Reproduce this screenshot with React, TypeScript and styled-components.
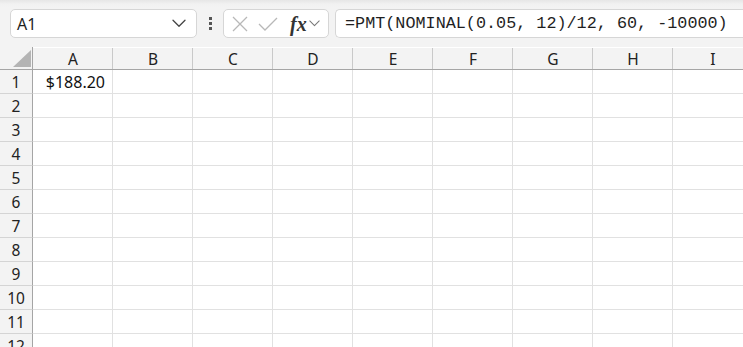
// REACT //
import React from 'react';

// COMPONENTS //
import styled, { createGlobalStyle } from 'styled-components';

const COLUMNS = ['A', 'B', 'C', 'D', 'E', 'F', 'G', 'H', 'I'];
const ROWS = [1, 2, 3, 4, 5, 6, 7, 8, 9, 10, 11, 12];

const cellValues: Record<string, string> = {
    A1: '$188.20',
};

const ChevronDown: React.FC<{ size?: number; color?: string }> = ({ size = 14, color = '#444' }) => (
    <svg width={size} height={size * 0.6} viewBox="0 0 14 8" fill="none">
        <path d="M1 1l6 6 6-6" stroke={color} strokeWidth="1.3" strokeLinecap="round" strokeLinejoin="round" />
    </svg>
);

const App: React.FC = () => {
    return (
        <Page>
            <GlobalStyle />
            <Toolbar>
                <NameBox>
                    <NameText>A1</NameText>
                    <ChevronDown />
                </NameBox>
                <Grip>
                    <span />
                    <span />
                    <span />
                </Grip>
                <FormulaButtons>
                    <svg width="18" height="18" viewBox="0 0 18 18" fill="none">
                        <path d="M2 2l14 14M16 2L2 16" stroke="#b8b8b8" strokeWidth="1.3" />
                    </svg>
                    <svg width="20" height="16" viewBox="0 0 20 16" fill="none">
                        <path d="M1 8l6 6L19 2" stroke="#b8b8b8" strokeWidth="1.3" />
                    </svg>
                    <FxGroup>
                        <Fx>fx</Fx>
                        <ChevronDown size={11} color="#777" />
                    </FxGroup>
                </FormulaButtons>
                <FormulaInput>=PMT(NOMINAL(0.05, 12)/12, 60, -10000)</FormulaInput>
            </Toolbar>
            <Sheet>
                <Corner>
                    <svg width="18" height="17" viewBox="0 0 18 17">
                        <polygon points="18,0 18,17 0,17" fill="#b4b4b4" />
                    </svg>
                </Corner>
                {COLUMNS.map(col => (
                    <ColHeader key={col}>{col}</ColHeader>
                ))}
                {ROWS.map(row => (
                    <React.Fragment key={row}>
                        <RowHeader>{row}</RowHeader>
                        {COLUMNS.map(col => (
                            <Cell key={col + row}>{cellValues[col + row] || ''}</Cell>
                        ))}
                    </React.Fragment>
                ))}
            </Sheet>
        </Page>
    );
};

// STYLES //
const GlobalStyle = createGlobalStyle`
    html, body {
        margin: 0;
        padding: 0;
        background: #ffffff;
        overflow: hidden;
    }
`;

const Page = styled.div`
    width: 743px;
    height: 347px;
    overflow: hidden;
    font-family: 'Noto Sans', 'Open Sans', sans-serif;
    color: #1f1f1f;
    background: #f3f3f3;
`;

const Toolbar = styled.div`
    height: 47px;
    box-sizing: border-box;
    display: flex;
    align-items: flex-start;
    padding: 9px 0 0 10px;
    background: linear-gradient(#e6e6e6 0px, #f1f1f1 4px, #f3f3f3 8px);
`;

const NameBox = styled.div`
    width: 187px;
    height: 29px;
    box-sizing: border-box;
    display: flex;
    align-items: center;
    justify-content: space-between;
    padding: 0 10px 0 6px;
    background: #ffffff;
    border: 1px solid #d6d6d6;
    border-radius: 5px;
`;

const NameText = styled.span`
    font-size: 16px;
`;

const Grip = styled.div`
    width: 26px;
    height: 29px;
    display: flex;
    flex-direction: column;
    align-items: center;
    justify-content: center;
    gap: 2px;

    span {
        width: 3px;
        height: 3px;
        background: #555;
    }
`;

const FormulaButtons = styled.div`
    width: 106px;
    height: 29px;
    box-sizing: border-box;
    display: flex;
    align-items: center;
    gap: 9px;
    padding: 0 4px 0 7px;
    background: #ffffff;
    border: 1px solid #d6d6d6;
    border-radius: 5px;
`;

const FxGroup = styled.div`
    display: flex;
    align-items: center;
    gap: 2px;
    margin-left: 3px;
`;

const Fx = styled.span`
    font-family: 'Liberation Serif', 'DejaVu Serif', serif;
    font-style: italic;
    font-weight: bold;
    font-size: 20px;
    color: #333;
    line-height: 1;
`;

const FormulaInput = styled.div`
    flex: 1;
    margin-left: 6px;
    height: 29px;
    box-sizing: border-box;
    display: flex;
    align-items: center;
    padding-left: 9px;
    margin-right: -10px;
    background: #ffffff;
    border: 1px solid #d6d6d6;
    border-right: none;
    border-radius: 5px 0 0 5px;
    font-family: 'Liberation Mono', 'DejaVu Sans Mono', monospace;
    font-size: 16.8px;
    white-space: nowrap;
    color: #1f1f1f;
`;

const Sheet = styled.div`
    display: grid;
    grid-template-columns: 33px repeat(9, 80px);
    grid-template-rows: 23px repeat(12, 24px);
    background: #ffffff;
`;

const Corner = styled.div`
    background: #f3f3f3;
    border-right: 1px solid #a5a5a5;
    border-bottom: 1px solid #a5a5a5;
    display: flex;
    align-items: flex-end;
    justify-content: flex-end;
    padding: 0 1px 2px 0;
    box-sizing: border-box;
`;

const ColHeader = styled.div`
    background: #f3f3f3;
    border-bottom: 1px solid #a5a5a5;
    box-shadow: inset -1px 0 0 0 #c9c9c9;
    margin-top: 1px;
    display: flex;
    align-items: center;
    justify-content: center;
    font-size: 15.5px;
    color: #222;
`;

const RowHeader = styled.div`
    background: #f3f3f3;
    border-right: 1px solid #a5a5a5;
    border-bottom: 1px solid #d4d4d4;
    display: flex;
    align-items: center;
    justify-content: center;
    font-size: 15.5px;
    color: #222;
`;

const Cell = styled.div`
    border-right: 1px solid #e1e1e1;
    border-bottom: 1px solid #e1e1e1;
    display: flex;
    align-items: center;
    justify-content: flex-end;
    padding-right: 7px;
    font-size: 16px;
    color: #111;
`;

export default App;
